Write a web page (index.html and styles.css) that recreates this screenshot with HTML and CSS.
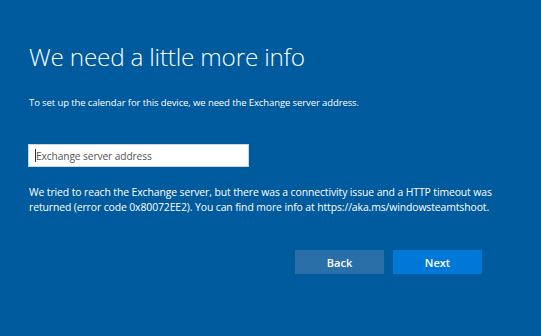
FILE: index.html
```html
<!DOCTYPE html>
<html lang="en">
<head>
  <meta charset="UTF-8">
  <title>We need a little more info</title>
  <link rel="stylesheet" href="styles.css">
</head>
<body>
  <div class="page">
    <h1 class="title">We need a little more info</h1>
    <p class="intro">To set up the calendar for this device, we need the Exchange server address.</p>

    <div class="field">
      <span class="caret"></span>
      <span class="placeholder">Exchange server address</span>
    </div>

    <p class="error">We tried to reach the Exchange server, but there was a connectivity issue and a HTTP timeout was returned (error code 0x80072EE2). You can find more info at https://aka.ms/windowsteamtshoot.</p>

    <div class="actions">
      <button class="btn back">Back</button>
      <button class="btn next">Next</button>
    </div>
  </div>
</body>
</html>
```
FILE: styles.css
```css
body {
  margin: 0;
  background-color: #005a9e;
  color: #ffffff;
  font-family: "Open Sans", "Noto Sans", sans-serif;
}

.page {
  height: 336px;
  padding: 0 40px 0 29px;
  box-sizing: border-box;
  overflow: hidden;
}

.title {
  margin: 0;
  padding-top: 42px;
  font-size: 24.3px;
  font-weight: 300;
  line-height: 30px;
  letter-spacing: -0.2px;
}

.intro {
  margin: 24px 0 0;
  font-size: 9.5px;
  line-height: 14px;
  letter-spacing: -0.1px;
}

.field {
  display: flex;
  align-items: center;
  width: 221px;
  height: 23px;
  margin-top: 34px;
  margin-left: -1px;
  padding-left: 6px;
  box-sizing: border-box;
  background: #ffffff;
  border: 1px solid #c9d6e3;
}

.caret {
  width: 1px;
  height: 13px;
  background: #333333;
}

.placeholder {
  color: #555555;
  font-size: 10.2px;
  letter-spacing: -0.1px;
}

.error {
  margin: 18px 0 0;
  font-size: 10.4px;
  line-height: 15px;
  letter-spacing: -0.1px;
}

.actions {
  display: flex;
  justify-content: flex-end;
  gap: 9px;
  margin: 35px 19px 0 0;
}

.btn {
  width: 89px;
  height: 24px;
  border: none;
  color: #ffffff;
  font-family: inherit;
  font-size: 11px;
  font-weight: 600;
}

.back {
  background: #2b6fa8;
}

.next {
  background: #0078d7;
}
```
